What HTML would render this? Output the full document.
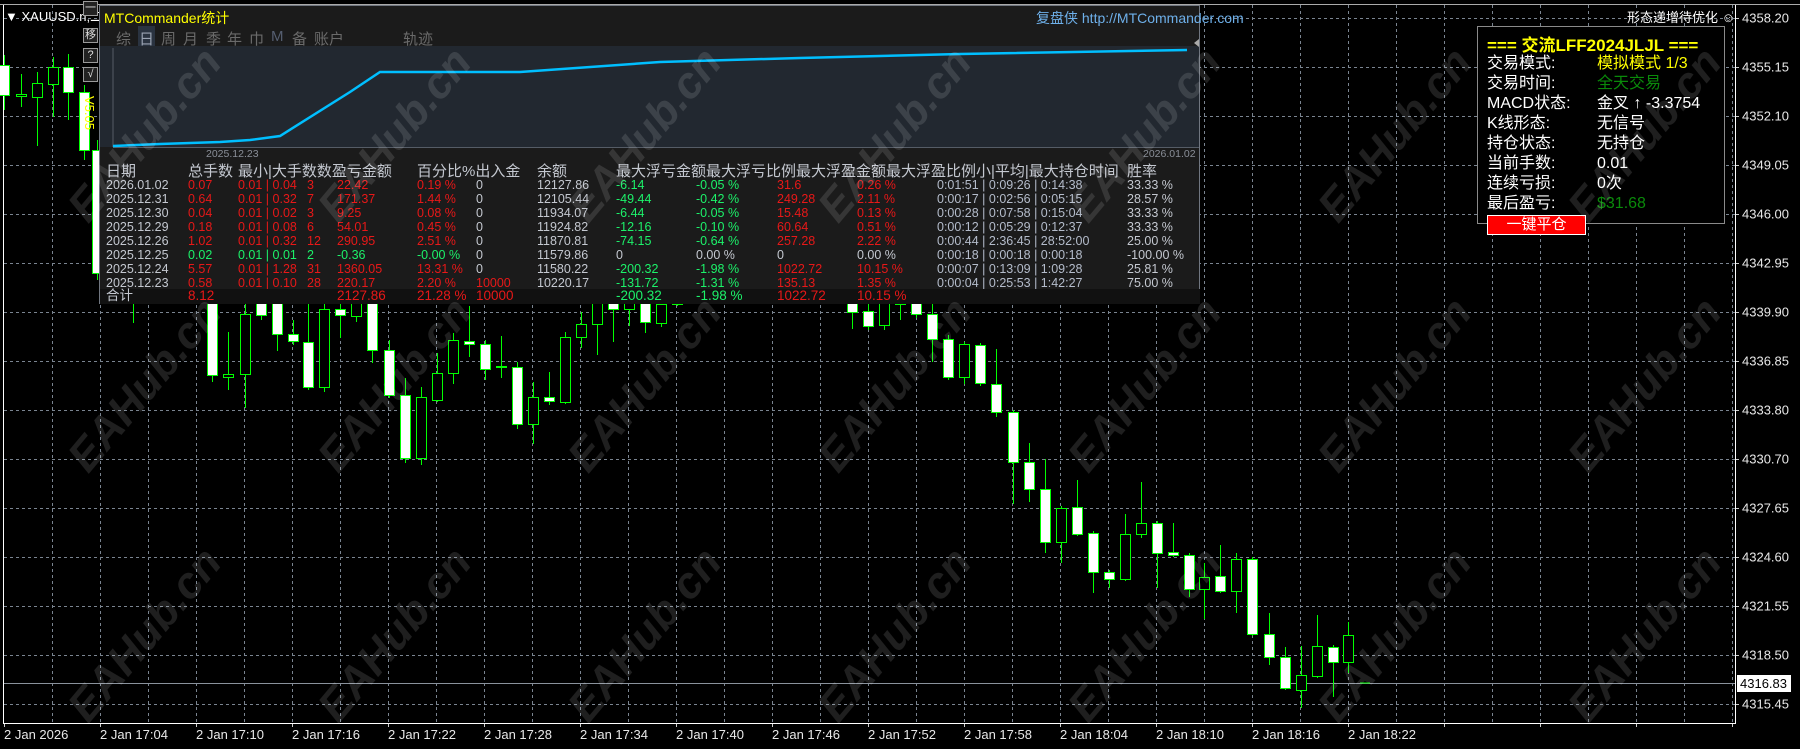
<!DOCTYPE html>
<html><head><meta charset="utf-8">
<style>
*{margin:0;padding:0;box-sizing:border-box}
body{width:1800px;height:749px;background:#000;overflow:hidden;position:relative;font-family:"Liberation Sans","Noto Sans CJK SC",sans-serif;color:#fff}
.a{position:absolute;white-space:nowrap}
#chart{position:absolute;left:0;top:0}
.pl{position:absolute;left:1742px;font-size:13px;color:#e8e8e8;transform:translateY(-50%)}
.tl{position:absolute;top:727px;font-size:13px;color:#e8e8e8}
#panel{position:absolute;left:99px;top:5px;width:1101px;height:299px;background:#1b1b1b;border:1px solid #707680}
.tab{position:absolute;top:22px;font-size:15px;color:#6a6a6a}
.r{position:absolute;left:0;width:1100px;height:14px;font-size:12.5px;line-height:14px}
.r span{position:absolute;top:0}
.g{color:#c4c8d0}.R{color:#e81818}.G{color:#1cf26a}.b{color:#b4bccb}
.hd{position:absolute;top:157px;font-size:15px;color:#c4c8d0;line-height:18px}
#info{position:absolute;left:1477px;top:26px;width:248px;height:198px;border:1px solid #8a8a8a;background:#000}
.il{position:absolute;left:9px;font-size:16px;color:#fff;line-height:20px;height:20px}
.iv{position:absolute;left:119px;font-size:16px;line-height:20px;height:20px}
.wm{position:absolute;font:italic bold 44px "Liberation Sans",sans-serif;color:rgba(255,255,255,0.12);transform:rotate(-50deg);transform-origin:center;white-space:nowrap}
.btn{position:absolute;left:83px;width:15px;height:15px;border:1px solid #9a9a9a;background:#222;color:#ddd;font-size:11px;text-align:center;line-height:13px}
</style></head><body>
<svg id="chart" width="1800" height="749"></svg>

<div class="a" style="left:5px;top:6px;font-size:13px;color:#fff">▼ XAUUSD.n,二</div>
<div class="btn" style="top:1px">一</div>
<div class="btn" style="top:28px">移</div>
<div class="btn" style="top:48px">?</div>
<div class="btn" style="top:67px">√</div>
<div class="a" style="top:96px;font-size:13px;color:#ffff00;transform:rotate(90deg);transform-origin:left top;left:97px">V5.05</div>

<div class="pl" style="top:18px">4358.20</div>
<div class="pl" style="top:67px">4355.15</div>
<div class="pl" style="top:116px">4352.10</div>
<div class="pl" style="top:165px">4349.05</div>
<div class="pl" style="top:214px">4346.00</div>
<div class="pl" style="top:263px">4342.95</div>
<div class="pl" style="top:312px">4339.90</div>
<div class="pl" style="top:361px">4336.85</div>
<div class="pl" style="top:410px">4333.80</div>
<div class="pl" style="top:459px">4330.70</div>
<div class="pl" style="top:508px">4327.65</div>
<div class="pl" style="top:557px">4324.60</div>
<div class="pl" style="top:606px">4321.55</div>
<div class="pl" style="top:655px">4318.50</div>
<div class="pl" style="top:704px">4315.45</div>
<div class="a" style="left:1737px;top:675px;width:54px;height:17px;background:#fff;color:#000;font-size:13px;line-height:17px;padding-left:3px">4316.83</div>

<div class="tl" style="left:4px">2 Jan 2026</div>
<div class="tl" style="left:100px">2 Jan 17:04</div>
<div class="tl" style="left:196px">2 Jan 17:10</div>
<div class="tl" style="left:292px">2 Jan 17:16</div>
<div class="tl" style="left:388px">2 Jan 17:22</div>
<div class="tl" style="left:484px">2 Jan 17:28</div>
<div class="tl" style="left:580px">2 Jan 17:34</div>
<div class="tl" style="left:676px">2 Jan 17:40</div>
<div class="tl" style="left:772px">2 Jan 17:46</div>
<div class="tl" style="left:868px">2 Jan 17:52</div>
<div class="tl" style="left:964px">2 Jan 17:58</div>
<div class="tl" style="left:1060px">2 Jan 18:04</div>
<div class="tl" style="left:1156px">2 Jan 18:10</div>
<div class="tl" style="left:1252px">2 Jan 18:16</div>
<div class="tl" style="left:1348px">2 Jan 18:22</div>

<div class="a" style="left:1627px;top:7px;font-size:13px;color:#fff">形态递增待优化 ☺</div>

<div id="panel">
  <div class="a" style="left:4px;top:2px;font-size:14px;color:#ffff00">MTCommander统计</div>
  <div class="a" style="left:936px;top:2px;font-size:14px;color:#6eb0ea">复盘侠 http://MTCommander.com</div>
  <div class="a" style="left:38px;top:20px;width:17px;height:20px;background:#2a3340"></div>
  <span class="tab" style="left:16px">综</span>
  <span class="tab" style="left:39px;color:#9aa3b2">日</span>
  <span class="tab" style="left:61px">周</span>
  <span class="tab" style="left:83px">月</span>
  <span class="tab" style="left:106px">季</span>
  <span class="tab" style="left:127px">年</span>
  <span class="tab" style="left:149px">巾</span>
  <span class="tab" style="left:171px;color:#555e70">M</span>
  <span class="tab" style="left:192px">备</span>
  <span class="tab" style="left:214px">账户</span>
  <span class="tab" style="left:303px">轨迹</span>
  <div class="a" style="left:0;top:40px;width:1099px;height:101px;background:#222830"></div>
  <svg class="a" style="left:0;top:0" width="1100" height="160">
    <line x1="13" y1="42" x2="13" y2="141" stroke="#555c66" stroke-width="1"/>
    <line x1="13" y1="141.5" x2="1099" y2="141.5" stroke="#555c66" stroke-width="1"/>
    <polyline fill="none" stroke="#00bfff" stroke-width="2.5" points="13,140 60,138 120,136 150,134 180,130 250,86 280,66 420,66 560,56 700,52 860,48 1087,44"/>
    <polygon points="1094,37 1099,33 1099,41" fill="#aaa"/>
  </svg>
  <div class="a" style="left:106px;top:142px;font-size:10.5px;color:#8a8f98">2025.12.23</div>
  <div class="a" style="left:1043px;top:142px;font-size:10.5px;color:#8a8f98">2026.01.02</div>

  <span class="hd" style="left:6px">日期</span>
  <span class="hd" style="left:88px">总手数</span>
  <span class="hd" style="left:138px">最小|大手数数盈亏金额</span>
  <span class="hd" style="left:317px">百分比%出入金</span>
  <span class="hd" style="left:437px">余额</span>
  <span class="hd" style="left:516px">最大浮亏金额最大浮亏比例最大浮盈金额最大浮盈比例小|平均|最大持仓时间</span>
  <span class="hd" style="left:1027px">胜率</span>

  <div class="r" style="top:172px"><span class="g" style="left:6px">2026.01.02</span><span class="R" style="left:88px">0.07</span><span class="R" style="left:138px">0.01 | 0.04</span><span class="R" style="left:207px">3</span><span class="R" style="left:237px">22.42</span><span class="R" style="left:317px">0.19 %</span><span class="g" style="left:376px">0</span><span class="g" style="left:437px">12127.86</span><span class="G" style="left:516px">-6.14</span><span class="G" style="left:596px">-0.05 %</span><span class="R" style="left:677px">31.6</span><span class="R" style="left:757px">0.26 %</span><span class="b" style="left:837px">0:01:51 | 0:09:26 | 0:14:38</span><span class="g" style="left:1027px">33.33 %</span></div>
  <div class="r" style="top:186px"><span class="g" style="left:6px">2025.12.31</span><span class="R" style="left:88px">0.64</span><span class="R" style="left:138px">0.01 | 0.32</span><span class="R" style="left:207px">7</span><span class="R" style="left:237px">171.37</span><span class="R" style="left:317px">1.44 %</span><span class="g" style="left:376px">0</span><span class="g" style="left:437px">12105.44</span><span class="G" style="left:516px">-49.44</span><span class="G" style="left:596px">-0.42 %</span><span class="R" style="left:677px">249.28</span><span class="R" style="left:757px">2.11 %</span><span class="b" style="left:837px">0:00:17 | 0:02:56 | 0:05:15</span><span class="g" style="left:1027px">28.57 %</span></div>
  <div class="r" style="top:200px"><span class="g" style="left:6px">2025.12.30</span><span class="R" style="left:88px">0.04</span><span class="R" style="left:138px">0.01 | 0.02</span><span class="R" style="left:207px">3</span><span class="R" style="left:237px">9.25</span><span class="R" style="left:317px">0.08 %</span><span class="g" style="left:376px">0</span><span class="g" style="left:437px">11934.07</span><span class="G" style="left:516px">-6.44</span><span class="G" style="left:596px">-0.05 %</span><span class="R" style="left:677px">15.48</span><span class="R" style="left:757px">0.13 %</span><span class="b" style="left:837px">0:00:28 | 0:07:58 | 0:15:04</span><span class="g" style="left:1027px">33.33 %</span></div>
  <div class="r" style="top:214px"><span class="g" style="left:6px">2025.12.29</span><span class="R" style="left:88px">0.18</span><span class="R" style="left:138px">0.01 | 0.08</span><span class="R" style="left:207px">6</span><span class="R" style="left:237px">54.01</span><span class="R" style="left:317px">0.45 %</span><span class="g" style="left:376px">0</span><span class="g" style="left:437px">11924.82</span><span class="G" style="left:516px">-12.16</span><span class="G" style="left:596px">-0.10 %</span><span class="R" style="left:677px">60.64</span><span class="R" style="left:757px">0.51 %</span><span class="b" style="left:837px">0:00:12 | 0:05:29 | 0:12:37</span><span class="g" style="left:1027px">33.33 %</span></div>
  <div class="r" style="top:228px"><span class="g" style="left:6px">2025.12.26</span><span class="R" style="left:88px">1.02</span><span class="R" style="left:138px">0.01 | 0.32</span><span class="R" style="left:207px">12</span><span class="R" style="left:237px">290.95</span><span class="R" style="left:317px">2.51 %</span><span class="g" style="left:376px">0</span><span class="g" style="left:437px">11870.81</span><span class="G" style="left:516px">-74.15</span><span class="G" style="left:596px">-0.64 %</span><span class="R" style="left:677px">257.28</span><span class="R" style="left:757px">2.22 %</span><span class="b" style="left:837px">0:00:44 | 2:36:45 | 28:52:00</span><span class="g" style="left:1027px">25.00 %</span></div>
  <div class="r" style="top:242px"><span class="g" style="left:6px">2025.12.25</span><span class="G" style="left:88px">0.02</span><span class="G" style="left:138px">0.01 | 0.01</span><span class="G" style="left:207px">2</span><span class="G" style="left:237px">-0.36</span><span class="G" style="left:317px">-0.00 %</span><span class="g" style="left:376px">0</span><span class="g" style="left:437px">11579.86</span><span class="g" style="left:516px">0</span><span class="g" style="left:596px">0.00 %</span><span class="g" style="left:677px">0</span><span class="g" style="left:757px">0.00 %</span><span class="b" style="left:837px">0:00:18 | 0:00:18 | 0:00:18</span><span class="g" style="left:1027px">-100.00 %</span></div>
  <div class="r" style="top:256px"><span class="g" style="left:6px">2025.12.24</span><span class="R" style="left:88px">5.57</span><span class="R" style="left:138px">0.01 | 1.28</span><span class="R" style="left:207px">31</span><span class="R" style="left:237px">1360.05</span><span class="R" style="left:317px">13.31 %</span><span class="g" style="left:376px">0</span><span class="g" style="left:437px">11580.22</span><span class="G" style="left:516px">-200.32</span><span class="G" style="left:596px">-1.98 %</span><span class="R" style="left:677px">1022.72</span><span class="R" style="left:757px">10.15 %</span><span class="b" style="left:837px">0:00:07 | 0:13:09 | 1:09:28</span><span class="g" style="left:1027px">25.81 %</span></div>
  <div class="r" style="top:270px"><span class="g" style="left:6px">2025.12.23</span><span class="R" style="left:88px">0.58</span><span class="R" style="left:138px">0.01 | 0.10</span><span class="R" style="left:207px">28</span><span class="R" style="left:237px">220.17</span><span class="R" style="left:317px">2.20 %</span><span class="R" style="left:376px">10000</span><span class="g" style="left:437px">10220.17</span><span class="G" style="left:516px">-131.72</span><span class="G" style="left:596px">-1.31 %</span><span class="R" style="left:677px">135.13</span><span class="R" style="left:757px">1.35 %</span><span class="b" style="left:837px">0:00:04 | 0:25:53 | 1:42:27</span><span class="g" style="left:1027px">75.00 %</span></div>
  <div class="r" style="top:283px;height:15px;background:#111;font-size:13.5px"><span class="g" style="left:6px">合计</span><span class="R" style="left:88px">8.12</span><span class="R" style="left:237px">2127.86</span><span class="R" style="left:317px">21.28 %</span><span class="R" style="left:376px">10000</span><span class="G" style="left:516px">-200.32</span><span class="G" style="left:596px">-1.98 %</span><span class="R" style="left:677px">1022.72</span><span class="R" style="left:757px">10.15 %</span></div>
</div>

<div id="info">
  <div class="a" style="left:9px;top:9px;font-size:17px;line-height:20px;height:20px;font-weight:bold;color:#ffff00">=== 交流LFF2024JLJL ===</div>
  <div class="il" style="top:27px">交易模式:</div><div class="iv" style="top:27px;color:#ffff00">模拟模式 1/3</div>
  <div class="il" style="top:47px">交易时间:</div><div class="iv" style="top:47px;color:#0a8a0a">全天交易</div>
  <div class="il" style="top:67px">MACD状态:</div><div class="iv" style="top:67px;color:#fff">金叉 ↑ -3.3754</div>
  <div class="il" style="top:87px">K线形态:</div><div class="iv" style="top:87px;color:#fff">无信号</div>
  <div class="il" style="top:107px">持仓状态:</div><div class="iv" style="top:107px;color:#fff">无持仓</div>
  <div class="il" style="top:127px">当前手数:</div><div class="iv" style="top:127px;color:#fff">0.01</div>
  <div class="il" style="top:147px">连续亏损:</div><div class="iv" style="top:147px;color:#fff">0次</div>
  <div class="il" style="top:167px">最后盈亏:</div><div class="iv" style="top:167px;color:#0a8a0a">$31.68</div>
</div>
<div class="a" style="left:1487px;top:215px;width:99px;height:20px;background:#ff0000;border:1px solid #fff;color:#fff;font-size:15px;text-align:center;line-height:18px">一键平仓</div>

<div class="wm" style="left:40px;top:110px">EAHub.cn</div>
<div class="wm" style="left:290px;top:110px">EAHub.cn</div>
<div class="wm" style="left:540px;top:110px">EAHub.cn</div>
<div class="wm" style="left:790px;top:110px">EAHub.cn</div>
<div class="wm" style="left:1040px;top:110px">EAHub.cn</div>
<div class="wm" style="left:1290px;top:110px">EAHub.cn</div>
<div class="wm" style="left:1540px;top:110px">EAHub.cn</div>
<div class="wm" style="left:40px;top:360px">EAHub.cn</div>
<div class="wm" style="left:290px;top:360px">EAHub.cn</div>
<div class="wm" style="left:540px;top:360px">EAHub.cn</div>
<div class="wm" style="left:790px;top:360px">EAHub.cn</div>
<div class="wm" style="left:1040px;top:360px">EAHub.cn</div>
<div class="wm" style="left:1290px;top:360px">EAHub.cn</div>
<div class="wm" style="left:1540px;top:360px">EAHub.cn</div>
<div class="wm" style="left:40px;top:610px">EAHub.cn</div>
<div class="wm" style="left:290px;top:610px">EAHub.cn</div>
<div class="wm" style="left:540px;top:610px">EAHub.cn</div>
<div class="wm" style="left:790px;top:610px">EAHub.cn</div>
<div class="wm" style="left:1040px;top:610px">EAHub.cn</div>
<div class="wm" style="left:1290px;top:610px">EAHub.cn</div>
<div class="wm" style="left:1540px;top:610px">EAHub.cn</div>

<script>
var s=document.getElementById('chart'),h='';
for(var k=0;k<15;k++){var y=18+49*k+0.5;h+='<line x1="4" y1="'+y+'" x2="1735" y2="'+y+'" stroke="#7a8490" stroke-dasharray="3,3"/>';h+='<line x1="1735" y1="'+y+'" x2="1739" y2="'+y+'" stroke="#ccc"/>';}
for(var x=52;x<1735;x+=48){h+='<line x1="'+(x+0.5)+'" y1="5" x2="'+(x+0.5)+'" y2="723" stroke="#7a8490" stroke-dasharray="3,3"/>';}
for(var x=4;x<1735;x+=96){h+='<line x1="'+(x+0.5)+'" y1="723" x2="'+(x+0.5)+'" y2="727" stroke="#ccc"/>';}
h+='<line x1="4" y1="683.5" x2="1735" y2="683.5" stroke="#8a929c"/>';
h+='<line x1="0" y1="4.5" x2="1800" y2="4.5" stroke="#aaa"/>';
h+='<line x1="3.5" y1="5" x2="3.5" y2="723" stroke="#fff"/>';
h+='<line x1="3" y1="723.5" x2="1736" y2="723.5" stroke="#fff"/>';
h+='<line x1="1735.5" y1="5" x2="1735.5" y2="724" stroke="#fff"/>';
var c=[[4,65,95,55,110,0],[21,94,96,74,107,1],[37,83,97,72,146,1],[53,67,84,57,117,1],[68,67,92,54,120,0],[84,92,150,85,160,0],[97,150,273,140,280,0],
[133,280,300,270,323,1],[212,280,375,270,382,0],[228,374,377,332,390,1],[245,314,374,290,408,1],[261,290,315,280,320,0],[277,290,334,285,351,0],[293,334,341,320,345,0],[308,342,387,300,390,0],[324,309,387,300,392,1],[340,309,315,300,338,0],[356,287,316,280,322,1],[372,290,350,285,363,0],[389,350,395,340,398,0],[405,395,458,378,463,0],[421,397,458,387,465,1],[437,373,400,353,402,1],[453,340,373,333,384,1],[469,341,344,306,357,0],[485,344,369,340,380,0],[501,366,367,336,378,0],[517,367,424,362,429,0],[533,397,424,382,444,1],[549,397,401,372,405,0],[565,337,402,332,404,1],[581,324,337,312,348,1],[597,300,324,295,355,1],[613,303,309,295,342,0],[629,303,309,295,326,1],[645,303,322,295,333,0],[661,304,323,295,327,1],[677,302,304,296,306,1],
[852,300,312,295,329,0],[868,311,326,300,330,0],[884,300,325,295,330,1],[900,298,304,290,320,0],[916,300,314,295,318,0],[932,314,339,300,362,0],[948,339,377,335,380,0],[964,344,377,342,384,1],[980,345,383,343,386,0],[996,384,412,349,417,0],[1013,412,462,410,504,0],[1029,462,489,443,502,0],[1045,489,542,459,553,0],[1061,508,542,506,563,1],[1077,507,534,480,536,0],[1093,533,572,531,593,0],[1109,572,579,570,588,0],[1125,534,579,514,581,1],[1141,523,534,482,538,1],[1157,523,553,521,588,0],[1173,552,555,523,557,0],[1189,555,589,553,597,0],[1204,577,589,563,619,1],[1220,576,591,545,593,0],[1236,559,591,553,613,1],[1252,559,634,557,636,0],[1269,634,657,613,665,0],[1285,657,688,647,690,0],[1301,675,690,646,708,1],[1317,646,676,615,678,1],[1333,647,662,645,697,0],[1348,635,662,622,673,1]];
c.forEach(function(d){var x=d[0];h+='<line x1="'+(x+0.5)+'" y1="'+d[3]+'" x2="'+(x+0.5)+'" y2="'+d[4]+'" stroke="#00ff00"/>';var bh=Math.max(d[2]-d[1],1);h+='<rect x="'+(x-4.5)+'" y="'+(d[1]+0.5)+'" width="10" height="'+bh+'" fill="'+(d[5]?'#000':'#fff')+'" stroke="#00ff00" stroke-width="1"/>';});
h+='<line x1="1360" y1="683" x2="1370" y2="683" stroke="#00ff00"/>';
s.innerHTML=h;
</script>
</body></html>
